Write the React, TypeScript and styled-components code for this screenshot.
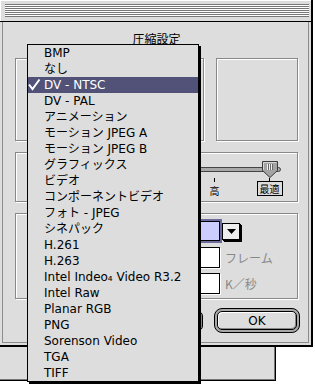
import styled, { createGlobalStyle } from "styled-components";

const GlobalStyle = createGlobalStyle`
  html, body {
    margin: 0;
    padding: 0;
    background: #ffffff;
  }
  body {
    font-family: "DejaVu Sans", "Noto Sans CJK JP", sans-serif;
    font-size: 12px;
    color: #000;
  }
`;

const codecs = [
  "BMP",
  "なし",
  "DV - NTSC",
  "DV - PAL",
  "アニメーション",
  "モーション JPEG A",
  "モーション JPEG B",
  "グラフィックス",
  "ビデオ",
  "コンポーネントビデオ",
  "フォト - JPEG",
  "シネパック",
  "H.261",
  "H.263",
  "Intel Indeo₄ Video R3.2",
  "Intel Raw",
  "Planar RGB",
  "PNG",
  "Sorenson Video",
  "TGA",
  "TIFF",
];
const SELECTED = "DV - NTSC";

// only the two right-hand labels show past the open menu
const qualities = ["", "", "", "高", "最適"];

const motionRows = [
  { suffix: "", active: true },
  { suffix: "フレーム", active: false },
  { suffix: "K／秒", active: false },
];

const App = () => {
  return (
    <Desktop>
      <GlobalStyle />
      <BackWindow />
      <Window>
        <TitleBar>
          <Stripes />
        </TitleBar>
        <Frame>
          <Panel>
            <DialogTitle>圧縮設定</DialogTitle>
            <TopRow>
              <GroupBox $w={189} />
              <GroupBox />
            </TopRow>

            <GroupBox $h={50} $mt={11}>
              <SliderRow>
                <Track />
                <Thumb width="16" height="17" viewBox="0 0 16 17">
                  <polygon
                    points="0.5,0.5 15.5,0.5 15.5,9.5 8,16.5 0.5,9.5"
                    fill="#a4a4a4"
                    stroke="#3a3a3a"
                  />
                  <polyline points="1.5,9 1.5,1.5 14.5,1.5" fill="none" stroke="#d8d8d8" />
                  <path d="M5.5 3v6M7.5 3v6M9.5 3v6" stroke="#f0f0f0" />
                  <path d="M6.5 3v6M8.5 3v6M10.5 3v6" stroke="#6a6a6a" />
                </Thumb>
              </SliderRow>
              <TickRow>
                {qualities.map((q, i) => (
                  <TickCell key={i}>
                    <Tick $active={i === qualities.length - 1} />
                    {q && <QualityLabel $active={i === qualities.length - 1}>{q}</QualityLabel>}
                  </TickCell>
                ))}
              </TickRow>
            </GroupBox>

            <GroupBox $h={86} $mt={11} $pt={6}>
              <MotionRows>
                {motionRows.map((r, i) => (
                  <MotionRow key={i}>
                    <Field $active={r.active} />
                    {r.active ? (
                      <ArrowButton>
                        <svg width="9" height="5" viewBox="0 0 9 5">
                          <polygon points="0,0 9,0 4.5,5" fill="#000" />
                        </svg>
                      </ArrowButton>
                    ) : (
                      <Suffix>{r.suffix}</Suffix>
                    )}
                  </MotionRow>
                ))}
              </MotionRows>
            </GroupBox>

            <ButtonRow>
              <PushButton $w={72} />
              <DefaultRing>
                <PushButton>OK</PushButton>
              </DefaultRing>
            </ButtonRow>
          </Panel>
        </Frame>
      </Window>

      <Menu>
        {codecs.map((c) => (
          <MenuItem key={c} $active={c === SELECTED}>
            <CheckSlot>
              {c === SELECTED && (
                <svg width="14" height="16" viewBox="0 0 14 16">
                  <polyline
                    points="1,7.5 4.5,12 11.5,2.5"
                    fill="none"
                    stroke="#fff"
                    strokeWidth="2"
                  />
                </svg>
              )}
            </CheckSlot>
            <span>{c}</span>
          </MenuItem>
        ))}
      </Menu>
    </Desktop>
  );
};

export default App;

const Desktop = styled.div`
  position: relative;
  width: 315px;
  height: 384px;
  overflow: hidden;
  background: #ffffff;
`;

const BackWindow = styled.div`
  position: absolute;
  left: -10px;
  top: 200px;
  width: 284px;
  height: 179px;
  background: #dddddd;
  border: 1px solid #000;
  box-shadow: inset -1px -1px 0 #777;
`;

const Window = styled.div`
  position: absolute;
  left: 0;
  top: 0;
  width: 311px;
  height: 345px;
  display: flex;
  flex-direction: column;
  background: #dddddd;
  border-right: 2px solid #000;
  border-bottom: 2px solid #000;
`;

const TitleBar = styled.div`
  flex: none;
  height: 21px;
  display: flex;
  align-items: center;
  padding: 0 2px 0 5px;
  border-bottom: 1px solid #000;
  box-shadow: inset 1px 1px 0 #fff;
`;

const Stripes = styled.div`
  flex: 1;
  height: 13px;
  background: repeating-linear-gradient(to bottom, #777 0 1px, #fff 1px 2px);
`;

const Frame = styled.div`
  flex: 1;
  display: flex;
  padding: 0 2px 2px 2px;
`;

const Panel = styled.div`
  flex: 1;
  display: flex;
  flex-direction: column;
  border: 1px solid #8c8c8c;
  border-top: none;
  padding: 10px 10px 0 12px;
`;

const DialogTitle = styled.div`
  height: 16px;
  line-height: 16px;
  text-align: center;
`;

const TopRow = styled.div`
  display: flex;
  gap: 12px;
  margin-top: 10px;
  height: 83px;
`;

const GroupBox = styled.div<{ $w?: number; $h?: number; $mt?: number; $pt?: number }>`
  box-sizing: border-box;
  position: relative;
  ${(p) => (p.$w ? `width: ${p.$w}px;` : "flex: 1;")}
  ${(p) => (p.$h ? `height: ${p.$h}px; flex: none;` : "")}
  margin-top: ${(p) => p.$mt ?? 0}px;
  padding-top: ${(p) => p.$pt ?? 0}px;
  border: 1px solid #888;
  box-shadow: inset 1px 1px 0 #fff, 1px 1px 0 #fff;
`;

const SliderRow = styled.div`
  position: relative;
  height: 16px;
  margin-top: 8px;
  display: flex;
  align-items: center;
`;

const Track = styled.div`
  box-sizing: border-box;
  margin-left: 24px;
  width: 241px;
  height: 5px;
  border: 1px solid #444;
  border-radius: 3px;
  background: #a8a8a8;
`;

const Thumb = styled.svg`
  position: absolute;
  left: 246px;
  top: 0;
`;

const TickRow = styled.div`
  display: flex;
  margin-left: 6px;
`;

const TickCell = styled.div`
  width: 55px;
  flex: none;
  display: flex;
  flex-direction: column;
  align-items: center;
`;

const Tick = styled.div<{ $active?: boolean }>`
  width: 1px;
  height: ${(p) => (p.$active ? 3 : 4)}px;
  margin-top: 1px;
  background: #000;
`;

const QualityLabel = styled.div<{ $active?: boolean }>`
  font-family: "Noto Sans CJK JP", sans-serif;
  font-size: 10px;
  line-height: 11px;
  margin-top: ${(p) => (p.$active ? 0 : 3)}px;
  padding: ${(p) => (p.$active ? "1px 2px" : "0")};
  border: ${(p) => (p.$active ? "1px solid #000" : "none")};
`;

const MotionRows = styled.div`
  display: flex;
  flex-direction: column;
  gap: 4px;
`;

const MotionRow = styled.div`
  height: 22px;
  display: flex;
  align-items: center;
  padding-left: 140px;
`;

const Field = styled.div<{ $active?: boolean }>`
  box-sizing: border-box;
  width: 64px;
  height: ${(p) => (p.$active ? 20 : 21)}px;
  border: 1px solid #000;
  background: ${(p) => (p.$active ? "#ccccff" : "#fff")};
  box-shadow: ${(p) => (p.$active ? "0 0 0 2px #6b6b9b" : "1px 1px 0 #fff")};
`;

const ArrowButton = styled.div`
  box-sizing: border-box;
  align-self: flex-start;
  margin: 3px 0 0 2px;
  width: 18px;
  height: 17px;
  display: flex;
  align-items: center;
  justify-content: center;
  border: 1px solid #000;
  background: #eeeeee;
  box-shadow: 1px 1px 0 #000, 2px 2px 0 #000;
`;

const Suffix = styled.div`
  margin-left: 5px;
  color: #888;
  font-family: "Noto Sans CJK JP", sans-serif;
`;

const ButtonRow = styled.div`
  display: flex;
  justify-content: flex-end;
  align-items: center;
  gap: 11px;
  margin: 9px -2px 0 0;
`;

const DefaultRing = styled.div`
  box-sizing: border-box;
  width: 86px;
  height: 25px;
  padding: 2px;
  display: flex;
  border: 1px solid #000;
  border-radius: 8px;
  background: #a8a8a8;
`;

const PushButton = styled.div<{ $w?: number }>`
  box-sizing: border-box;
  ${(p) => (p.$w ? `width: ${p.$w}px; height: 20px;` : "flex: 1;")}
  display: flex;
  align-items: center;
  justify-content: center;
  border: 1px solid #000;
  border-radius: 5px;
  background: #dddddd;
  box-shadow: inset 1px 1px 0 #fff, inset -1px -1px 0 #888;
`;

const Menu = styled.div`
  position: absolute;
  left: 27px;
  top: 44px;
  width: 170px;
  border: 1px solid #000;
  box-shadow: 2px 2px 0 #000;
  background: #dddddd;
`;

const MenuItem = styled.div<{ $active?: boolean }>`
  height: 16px;
  line-height: 16px;
  display: flex;
  white-space: nowrap;
  background: ${(p) => (p.$active ? "#525278" : "transparent")};
  color: ${(p) => (p.$active ? "#fff" : "#000")};
`;

const CheckSlot = styled.span`
  width: 16px;
  flex: none;
  display: flex;
`;
